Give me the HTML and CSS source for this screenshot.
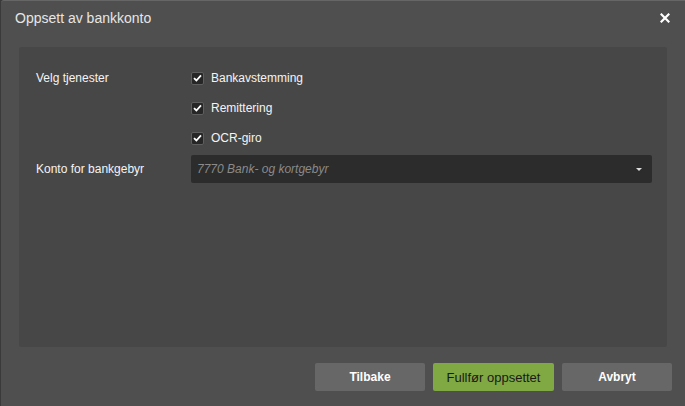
FILE: index.html
```html
<!DOCTYPE html>
<html lang="no">
<head>
<meta charset="utf-8">
<title>Oppsett av bankkonto</title>
<link rel="stylesheet" href="styles.css">
</head>
<body>
<div class="dialog">
  <div class="titlebar">
    <span class="title">Oppsett av bankkonto</span>
    <span class="close">
      <svg width="10" height="10" viewBox="0 0 10 10"><path d="M1.5 1.5 L8.5 8.5 M8.5 1.5 L1.5 8.5" stroke="#fff" stroke-width="2.2" stroke-linecap="square"/></svg>
    </span>
  </div>
  <div class="panel">
    <div class="form">
      <div class="label">Velg tjenester</div>
      <label class="check"><span class="box"><svg width="9" height="8" viewBox="0 0 9 8"><path d="M1 4.2 L3.4 6.5 L8 1.3" fill="none" stroke="#fff" stroke-width="1.8"/></svg></span>Bankavstemming</label>
      <div></div>
      <label class="check"><span class="box"><svg width="9" height="8" viewBox="0 0 9 8"><path d="M1 4.2 L3.4 6.5 L8 1.3" fill="none" stroke="#fff" stroke-width="1.8"/></svg></span>Remittering</label>
      <div></div>
      <label class="check"><span class="box"><svg width="9" height="8" viewBox="0 0 9 8"><path d="M1 4.2 L3.4 6.5 L8 1.3" fill="none" stroke="#fff" stroke-width="1.8"/></svg></span>OCR-giro</label>
      <div class="label label-select">Konto for bankgebyr</div>
      <div class="select">
        <span class="placeholder">7770 Bank- og kortgebyr</span>
        <span class="caret"></span>
      </div>
    </div>
  </div>
  <div class="footer">
    <button class="btn">Tilbake</button>
    <button class="btn btn-primary"><span class="btn-primary-text">Fullfør oppsettet</span></button>
    <button class="btn">Avbryt</button>
  </div>
</div>
</body>
</html>
```

FILE: styles.css
```css
html, body {
  margin: 0;
  padding: 0;
  background: #3a3a3a;
  font-family: "Liberation Sans", Arial, sans-serif;
}
.dialog {
  margin-left: 1px;
  height: 405px;
  background: #4f4f4f;
  border-top: 1px solid #666;
  border-radius: 3px 0 0 0;
  display: flex;
  flex-direction: column;
}
.titlebar {
  height: 46px;
  display: flex;
  align-items: flex-start;
  justify-content: space-between;
  padding: 0 15px 0 14px;
}
.title {
  margin-top: 9px;
  font-size: 14px;
  line-height: 16px;
  color: #e6e6e6;
}
.close {
  margin-top: 12px;
  width: 10px;
  height: 10px;
  display: flex;
}
.panel {
  margin: 0 18px 0 18px;
  height: 300px;
  background: #474747;
  border-radius: 2px;
  padding: 16px 14px 0 17px;
  box-sizing: border-box;
}
.form {
  display: grid;
  grid-template-columns: 155px 461px;
  grid-auto-rows: 30px;
  color: #f4f4f4;
  font-size: 12px;
}
.label {
  display: flex;
  align-items: center;
}
.label-select {
  margin-top: 2px;
  height: 28px;
}
.check {
  display: flex;
  align-items: center;
  gap: 7px;
}
.box {
  width: 11px;
  height: 11px;
  border: 1px solid #5e5e5e;
  background: #262626;
  border-radius: 2px;
  display: flex;
  align-items: center;
  justify-content: center;
}
.select {
  margin-top: 2px;
  height: 28px;
  background: #2c2c2c;
  border-radius: 2px;
  display: flex;
  align-items: center;
  justify-content: space-between;
  padding: 0 10px 0 6px;
}
.placeholder {
  font-style: italic;
  color: #8a8a8a;
  font-size: 12px;
}
.caret {
  width: 0;
  height: 0;
  border-left: 3px solid transparent;
  border-right: 3px solid transparent;
  border-top: 3px solid #ddd;
}
.footer {
  display: flex;
  justify-content: flex-end;
  gap: 8px;
  padding: 16px 13px 0 0;
}
.btn {
  height: 28px;
  width: 110px;
  border: none;
  border-radius: 2px;
  background: #676767;
  color: #fff;
  font-family: "Liberation Sans", Arial, sans-serif;
  font-size: 12px;
  font-weight: bold;
  padding: 0;
}
.btn.btn-primary {
  width: 121px;
  background: #80a843;
  font-weight: normal;
  font-size: 13px;
}
.btn-primary-text {
  color: #1a1a1a;
}
```
